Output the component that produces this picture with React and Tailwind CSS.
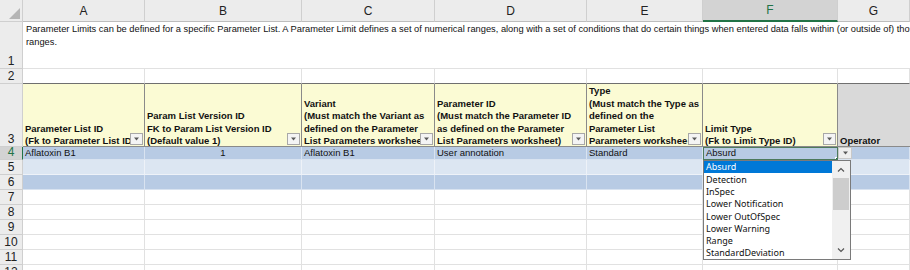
import React from "react";

const cols = ["A", "B", "C", "D", "E", "F", "G"];

function FilterBtn() {
  return (
    <div className="absolute right-[1px] bottom-[1px] w-[13px] h-[12px] border border-[#a8a8a8] bg-[#f4f4f4] flex items-center justify-center">
      <svg width="7" height="4" viewBox="0 0 7 4">
        <polygon points="1,0.5 6,0.5 3.5,3.5" fill="#5a5a5a" />
      </svg>
    </div>
  );
}

function RowNum({ n, selected }) {
  return (
    <div
      className={`flex items-end justify-center border-r border-b border-[#cfcfcf] text-[12px] leading-[14px] ${
        selected ? "bg-[#d3d3d3] text-[#217346] border-r-[#217346]" : "bg-[#ececec] text-[#222]"
      }`}
    >
      {n}
    </div>
  );
}

function HeadCell({ lines, filter = true }) {
  return (
    <div className="relative flex flex-col justify-end overflow-hidden bg-[#fbfbd4] border-r border-b border-[#8a8a8a] px-[2px] font-bold text-[9.5px] leading-[12.6px] text-[#111]">
      <div className="-mb-[2px]">
        {lines.map((l, i) => (
          <div key={i} className="whitespace-nowrap">{l}</div>
        ))}
      </div>
      {filter && <FilterBtn />}
    </div>
  );
}

function Cell({ children, bg, center, className = "" }) {
  return (
    <div
      className={`flex items-center overflow-hidden whitespace-nowrap px-[2px] text-[9.5px] text-[#111] border-r border-b ${bg} ${
        center ? "justify-center" : ""
      } ${className}`}
    >
      {children}
    </div>
  );
}

const items = [
  "Absurd",
  "Detection",
  "InSpec",
  "Lower Notification",
  "Lower OutOfSpec",
  "Lower Warning",
  "Range",
  "StandardDeviation",
];

export default function App() {
  const dark = "bg-[#b8cbe4] border-[#d9e3f0]";
  const light = "bg-[#dce6f2] border-[#eef2f8]";
  const white = "bg-white border-[#e1e1e1]";

  return (
    <div className="relative w-[910px] h-[270px] overflow-hidden bg-white" style={{ fontFamily: '"Liberation Sans", Arial, sans-serif' }}>
      <div className="grid grid-cols-[23px_122px_157px_133px_152px_116px_135px_72px] grid-rows-[22px_47px_15px_63px_13px_15px_15px_15px_15px_15px_15px_15px]">
        {/* column headers */}
        <div className="relative bg-[#ececec] border-r border-b border-[#cfcfcf]">
          <svg className="absolute right-[2px] bottom-[2px]" width="11" height="11" viewBox="0 0 11 11">
            <polygon points="11,0 11,11 0,11" fill="#b5b5b5" />
          </svg>
        </div>
        {cols.map((c) => (
          <div
            key={c}
            className={`flex items-center justify-center text-[12px] border-r border-[#cfcfcf] ${
              c === "F"
                ? "bg-[#d3d3d3] text-[#217346] border-b-2 border-b-[#217346]"
                : "bg-[#ececec] text-[#222] border-b border-b-[#bdbdbd]"
            }`}
          >
            {c}
          </div>
        ))}

        {/* row 1 */}
        <RowNum n={1} />
        <div className="col-span-7 overflow-hidden border-b border-[#e1e1e1] pl-[3px] pt-[1px] text-[9.3px] leading-[12.6px] text-[#111] whitespace-nowrap">
          Parameter Limits can be defined for a specific Parameter List. A Parameter Limit defines a set of numerical ranges, along with a set of conditions that do certain things when entered data falls within (or outside of) those
          <br />
          ranges.
        </div>

        {/* row 2 */}
        <RowNum n={2} />
        {cols.map((c) => (
          <div key={c} className="border-r border-b border-r-[#e1e1e1] border-b-[#6f6f6f]" />
        ))}

        {/* row 3 */}
        <RowNum n={3} />
        <HeadCell lines={["Parameter List ID", "(Fk to Parameter List ID"]} />
        <HeadCell lines={["Param List Version ID", "FK to Param List Version ID", "(Default value 1)"]} />
        <HeadCell lines={["Variant", "(Must match the Variant as", "defined on the Parameter", "List Parameters workshee"]} />
        <HeadCell lines={["Parameter ID", "(Must match the Parameter ID", "as defined on the Parameter", "List Parameters worksheet)"]} />
        <HeadCell lines={["Type", "(Must match the Type as", "defined on the", "Parameter List", "Parameters workshee"]} />
        <HeadCell lines={["Limit Type", "(Fk to Limit Type ID)"]} />
        <div className="flex flex-col justify-end bg-[#d9d9d9] border-b border-[#8a8a8a] px-[2px] font-bold text-[9.5px] leading-[12.6px] text-[#111]">
          <div className="-mb-[2px]">Operator</div>
        </div>

        {/* row 4 */}
        <RowNum n={4} selected />
        <Cell bg={dark}>Aflatoxin B1</Cell>
        <Cell bg={dark} center>1</Cell>
        <Cell bg={dark}>Aflatoxin B1</Cell>
        <Cell bg={dark}>User annotation</Cell>
        <Cell bg={dark}>Standard</Cell>
        <Cell bg={dark} className="relative !border !border-[#4d7a5c]">
          Absurd
          <div className="absolute right-[-2px] bottom-[-2px] w-[4px] h-[4px] bg-[#217346] border border-white" />
        </Cell>
        <Cell bg={dark} />

        {/* row 5 */}
        <RowNum n={5} />
        {cols.map((c) => (
          <Cell key={c} bg={light} />
        ))}

        {/* row 6 */}
        <RowNum n={6} />
        {cols.map((c) => (
          <Cell key={c} bg={dark} />
        ))}

        {[7, 8, 9, 10, 11, 12].map((r) => (
          <React.Fragment key={r}>
            <RowNum n={r} />
            {cols.map((c) => (
              <Cell key={c} bg={white} />
            ))}
          </React.Fragment>
        ))}
      </div>

      {/* validation dropdown button */}
      <div className="absolute left-[838px] top-[147px] w-[14px] h-[12px] bg-[#eeeeee] border border-[#c8c8c8] flex items-center justify-center">
        <svg width="7" height="4" viewBox="0 0 7 4">
          <polygon points="1,0.5 6,0.5 3.5,3.5" fill="#5a5a5a" />
        </svg>
      </div>

      {/* validation list */}
      <div className="absolute left-[703px] top-[160px] w-[148px] h-[100px] bg-white border border-[#7a7a7a] flex">
        <div className="flex-1 flex flex-col" style={{ fontFamily: '"Noto Sans", "Open Sans", sans-serif' }}>
          {items.map((it, i) => (
            <div
              key={it}
              className={`h-[12.3px] flex items-center pl-[2px] text-[9px] whitespace-nowrap ${
                i === 0 ? "bg-[#0078d7] text-white" : "text-[#111]"
              }`}
            >
              {it}
            </div>
          ))}
        </div>
        <div className="w-[18px] bg-[#f0f0f0] flex flex-col">
          <div className="h-[17px] flex items-center justify-center">
            <svg width="8" height="5" viewBox="0 0 8 5">
              <polyline points="1,4.5 4,1.5 7,4.5" fill="none" stroke="#555" strokeWidth="1.2" />
            </svg>
          </div>
          <div className="h-[32px] mx-[1px] bg-[#cdcdcd]" />
          <div className="flex-1" />
          <div className="h-[17px] flex items-center justify-center">
            <svg width="8" height="5" viewBox="0 0 8 5">
              <polyline points="1,0.5 4,3.5 7,0.5" fill="none" stroke="#555" strokeWidth="1.2" />
            </svg>
          </div>
        </div>
      </div>
    </div>
  );
}
